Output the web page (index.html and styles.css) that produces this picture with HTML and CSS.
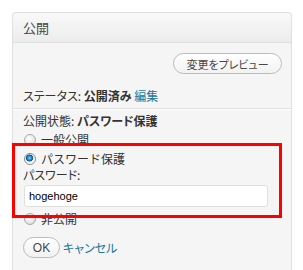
FILE: index.html
```html
<!DOCTYPE html>
<html lang="ja">
<head>
<meta charset="utf-8">
<link rel="stylesheet" href="styles.css">
</head>
<body>
<div class="box">
  <div class="hd">公開</div>
  <div class="bd">
    <div class="preview-row"><span class="btn btn-preview">変更をプレビュー</span></div>
    <div class="status">ステータス: <b>公開済み</b> <a class="link">編集</a></div>
    <div class="sep"></div>
    <div class="vis">
      <div class="vis-title">公開状態: <b>パスワード保護</b></div>
      <div class="radio-row"><span class="radio"></span><span class="lbl">一般公開</span></div>
      <div class="radio-row"><span class="radio on"></span><span class="lbl">パスワード保護</span></div>
      <div class="pw-label">パスワード:</div>
      <div class="input">hogehoge</div>
      <div class="radio-row r3"><span class="radio"></span><span class="lbl">非公開</span></div>
      <div class="actions"><span class="btn btn-ok">OK</span><a class="link">キャンセル</a></div>
    </div>
  </div>
</div>
<div class="highlight"></div>
</body>
</html>
```
FILE: styles.css
```css
html, body {
  margin: 0;
  padding: 0;
  background: #fff;
}
body {
  font-family: "Noto Sans CJK JP", sans-serif;
  font-size: 12px;
  color: #333;
  font-feature-settings: "palt";
}
.box {
  margin: 12px 0 0 12px;
  width: 280px;
  box-sizing: border-box;
  border: 1px solid #dfdfdf;
  border-radius: 4px 4px 0 0;
  height: 258px;
  border-bottom: 0;
  background: #f5f5f5;
  overflow: hidden;
}
.hd {
  height: 29px;
  line-height: 29px;
  border-bottom: 1px solid #dfdfdf;
  padding-left: 10px;
  font-size: 13px;
  background: linear-gradient(#f9f9f9, #ececec);
  color: #464646;
}
.bd {
  padding: 10px 9px 0 10px;
  background: #f5f5f5;
}
.preview-row {
  display: flex;
  justify-content: flex-end;
}
.btn {
  display: inline-flex;
  align-items: center;
  justify-content: center;
  box-sizing: border-box;
  height: 21px;
  border: 1px solid #bbb;
  border-radius: 11px;
  background: linear-gradient(#fff, #f2f2f2);
  font-size: 11px;
  color: #464646;
}
.btn-preview {
  width: 109px;
}
.status {
  margin-top: 13px;
  line-height: 18px;
}
b { font-weight: bold; color: #333; }
.link { color: #21759b; }
.sep {
  margin: 3px -9px 0 -10px;
  border-top: 1px solid #dfdfdf;
  border-bottom: 1px solid #fff;
}
.vis-title {
  margin-top: 2px;
  line-height: 18px;
}
.radio-row {
  display: flex;
  align-items: center;
  line-height: 19px;
  gap: 5px;
  padding-left: 1px;
}
.lbl {
  font-feature-settings: normal;
  font-size: 12px;
}
.radio {
  width: 12px;
  height: 12px;
  box-sizing: border-box;
  border-radius: 50%;
  border: 1px solid #a9a9a9;
  background: radial-gradient(circle at 40% 35%, #fff 0, #e6e6e6 60%, #cfcfcf 100%);
  display: inline-block;
}
.radio.on {
  background: radial-gradient(circle at 45% 40%, #7fd0ff 0, #1a7fc8 28%, #0b4f8a 40%, #e6e6e6 46%, #fff 70%, #d7d7d7 100%);
  border-color: #8a8a8a;
}
.pw-label {
  line-height: 18px;
  margin-top: -2px;
}
.input {
  margin: 1px 14px 0 1px;
  height: 22px;
  box-sizing: border-box;
  border: 1px solid #dfdfdf;
  border-radius: 3px;
  background: #fff;
  font-family: "Liberation Sans", sans-serif;
  font-size: 11px;
  color: #000;
  line-height: 20px;
  padding-left: 4px;
}
.r3 {
  margin-top: 2px;
}
.actions {
  margin-top: 9px;
  display: flex;
  align-items: center;
  gap: 3px;
}
.btn-ok {
  width: 37px;
  font-family: "Liberation Sans", sans-serif;
  font-size: 12px;
}
.highlight {
  position: absolute;
  left: 12px;
  top: 143px;
  width: 270px;
  height: 75px;
  box-sizing: border-box;
  border: 3px solid #f00;
}
```
